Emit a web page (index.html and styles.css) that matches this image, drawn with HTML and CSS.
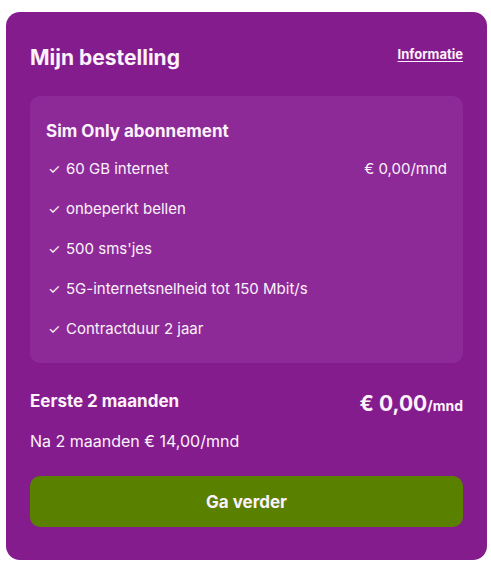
FILE: index.html
```html
<!DOCTYPE html>
<html lang="nl">
<head>
<meta charset="utf-8">
<link rel="stylesheet" href="styles.css">
</head>
<body>
<div class="card">
  <div class="header">
    <h1 class="title">Mijn bestelling</h1>
    <a class="info" href="#">Informatie</a>
  </div>
  <div class="box">
    <h2 class="box-title">Sim Only abonnement</h2>
    <ul class="list">
      <li class="item"><span class="check">&#10003;</span><span class="label">60 GB internet</span><span class="price">€ 0,00/mnd</span></li>
      <li class="item"><span class="check">&#10003;</span><span class="label">onbeperkt bellen</span></li>
      <li class="item"><span class="check">&#10003;</span><span class="label">500 sms'jes</span></li>
      <li class="item"><span class="check">&#10003;</span><span class="label">5G-internetsnelheid tot 150 Mbit/s</span></li>
      <li class="item"><span class="check">&#10003;</span><span class="label">Contractduur 2 jaar</span></li>
    </ul>
  </div>
  <div class="total">
    <span class="total-label">Eerste 2 maanden</span>
    <span class="total-price">€ 0,00<span class="per">/mnd</span></span>
  </div>
  <p class="after">Na 2 maanden € 14,00/mnd</p>
  <button class="btn">Ga verder</button>
</div>
</body>
</html>
```
FILE: styles.css
```css
* { box-sizing: border-box; }
html, body { margin: 0; padding: 0; background: #ffffff; }
body {
  font-family: Inter, "Liberation Sans", sans-serif;
  color: #fcf2fc;
  padding: 12px 4px 0 6px;
}
.card {
  width: 481px;
  height: 548px;
  background: #841c8e;
  border-radius: 14px;
  padding: 0 24px;
}
.header {
  display: flex;
  justify-content: space-between;
  align-items: flex-start;
  padding-top: 32px;
  height: 84px;
}
.title {
  margin: 0;
  font-size: 21px;
  font-weight: 700;
  line-height: 28px;
}
.info {
  color: #fcf2fc;
  font-size: 13px;
  font-weight: 700;
  line-height: 18px;
  text-decoration: underline;
  text-underline-offset: 2px;
  margin-top: 1px;
}
.box {
  background: #8d2a97;
  border-radius: 10px;
  padding: 24px 16px 12px 16px;
  height: 267px;
}
.box-title {
  margin: 0 0 6px 0;
  font-size: 17px;
  font-weight: 700;
  line-height: 22px;
}
.list { list-style: none; margin: 0; padding: 0; }
.item {
  display: flex;
  align-items: center;
  height: 40px;
  font-size: 15px;
}
.check {
  width: 20px;
  font-size: 14px;
  padding-left: 2px;
}
.label { flex: 1; }
.price { text-align: right; }
.total {
  display: flex;
  justify-content: space-between;
  align-items: flex-start;
  margin-top: 27px;
}
.total-label { font-size: 17px; font-weight: 700; line-height: 22px; }
.total-price { font-size: 21px; font-weight: 700; line-height: 28px; }
.per { font-size: 14px; }
.after {
  margin: 11px 0 0 0;
  font-size: 16px;
  line-height: 20px;
}
.btn {
  display: block;
  width: 100%;
  height: 51px;
  margin-top: 25px;
  border: 0;
  border-radius: 10px;
  background: #5a8000;
  color: #fcf2fc;
  font-family: inherit;
  font-size: 17px;
  font-weight: 700;
}
```
